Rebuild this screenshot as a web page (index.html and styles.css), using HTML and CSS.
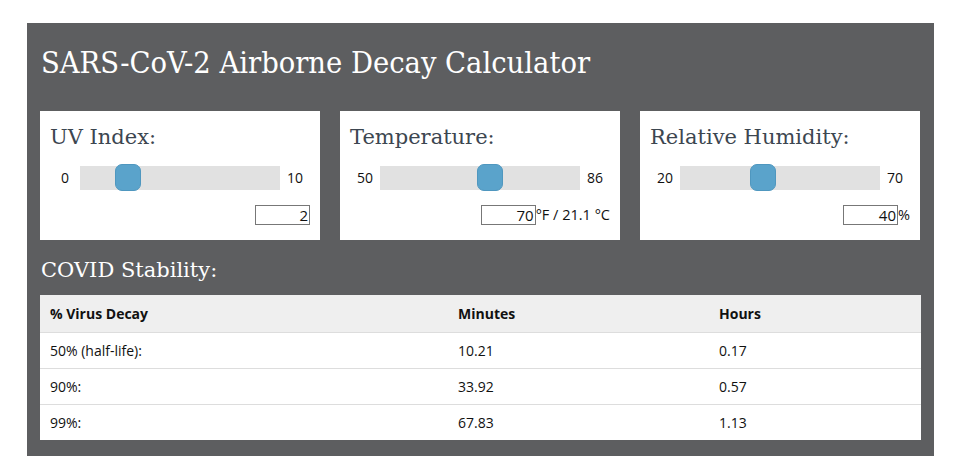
FILE: index.html
```html
<!DOCTYPE html>
<html>
<head>
    <meta charset="UTF-8">
    <title>SARS-CoV-2 Airborne Decay Calculator</title>
    <link rel="stylesheet" href="styles.css">
</head>

<body>
    <div class="calculator">
        <h1 class="calc-title">SARS-CoV-2 Airborne Decay Calculator</h1>

        <!-- inputs -->
        <div class="inputs">
            <div class="input-card">
                <h2>UV Index:</h2>
                <div class="slider-row">
                    <span class="range-label">0</span>
                    <input type="range" class="slider" min="0" max="10" value="2">
                    <span class="range-label">10</span>
                </div>
                <div class="value-row">
                    <input type="text" class="value-box" value="2">
                </div>
            </div>
            <div class="input-card">
                <h2>Temperature:</h2>
                <div class="slider-row">
                    <span class="range-label">50</span>
                    <input type="range" class="slider" min="50" max="86" value="70">
                    <span class="range-label">86</span>
                </div>
                <div class="value-row">
                    <input type="text" class="value-box" value="70"><span class="unit">°F / 21.1 °C</span>
                </div>
            </div>
            <div class="input-card">
                <h2>Relative Humidity:</h2>
                <div class="slider-row">
                    <span class="range-label">20</span>
                    <input type="range" class="slider" min="20" max="70" value="40">
                    <span class="range-label">70</span>
                </div>
                <div class="value-row">
                    <input type="text" class="value-box" value="40"><span class="unit">%</span>
                </div>
            </div>
        </div>

        <!-- results -->
        <h2 class="results-title">COVID Stability:</h2>
        <table class="results">
            <thead>
                <tr>
                    <th class="col-decay">% Virus Decay</th>
                    <th class="col-min">Minutes</th>
                    <th>Hours</th>
                </tr>
            </thead>
            <tbody>
                <tr><td>50% (half-life):</td><td>10.21</td><td>0.17</td></tr>
                <tr><td>90%:</td><td>33.92</td><td>0.57</td></tr>
                <tr><td>99%:</td><td>67.83</td><td>1.13</td></tr>
            </tbody>
        </table>
    </div>
</body>
</html>
```

FILE: styles.css
```css
body {
    margin: 0;
    padding: 23px 19px 0 27px;
    background-color: #FFFFFF;
    font-family: "Open Sans", "Liberation Sans", sans-serif;
}
.calculator {
    background-color: #5d5e60;
    padding: 22px 13px 16px 13px;
}
.calc-title {
    margin: 0 0 30px 1px;
    font-family: "DejaVu Serif Condensed", "DejaVu Serif", serif;
    font-weight: normal;
    font-size: 30.5px;
    line-height: 36px;
    color: #FFFFFF;
}
/* input cards */
.inputs {
    display: flex;
    gap: 20px;
}
.input-card {
    background-color: #FFFFFF;
    width: 260px;
    padding: 12px 10px 15px 10px;
}
.input-card h2 {
    margin: 0 0 13px 0;
    font-family: "DejaVu Serif", serif;
    font-weight: normal;
    font-size: 21px;
    line-height: 28px;
    color: #3c4650;
}
.slider-row {
    display: flex;
    align-items: center;
    height: 27px;
}
.range-label {
    width: 30px;
    text-align: center;
    font-size: 14px;
    color: #111;
}
.slider {
    -webkit-appearance: none;
    appearance: none;
    width: 200px;
    height: 24px;
    margin: 0;
    background-color: #e1e1e1;
    outline: none;
}
.slider::-webkit-slider-thumb {
    -webkit-appearance: none;
    appearance: none;
    width: 26px;
    height: 27px;
    border-radius: 7px;
    background-color: #5aa3cb;
    border: 1px solid #4f97bf;
    box-sizing: border-box;
}
.value-row {
    display: flex;
    justify-content: flex-end;
    align-items: center;
    margin-top: 14px;
    font-size: 14px;
    color: #111;
}
.value-box {
    width: 55px;
    height: 20px;
    box-sizing: border-box;
    border: 1px solid #777;
    padding: 0 1px 0 0;
    text-align: right;
    font-family: "Open Sans", "Liberation Sans", sans-serif;
    font-size: 15px;
    color: #111;
}
.unit {
    line-height: 20px;
    font-size: 14.5px;
}
/* results table */
.results-title {
    margin: 16px 0 11px 1px;
    font-family: "DejaVu Serif", serif;
    font-weight: normal;
    font-size: 21px;
    line-height: 28px;
    color: #FFFFFF;
}
.results {
    width: 100%;
    border-collapse: collapse;
    background-color: #FFFFFF;
    font-size: 14px;
    color: #111;
}
.results th {
    background-color: #efefef;
    text-align: left;
    font-weight: bold;
    height: 37px;
    padding: 0 10px;
}
.results td {
    height: 35px;
    padding: 0 10px;
    border-top: 1px solid #dddddd;
}
.col-decay {
    width: 388px;
}
.col-min {
    width: 241px;
}
```
